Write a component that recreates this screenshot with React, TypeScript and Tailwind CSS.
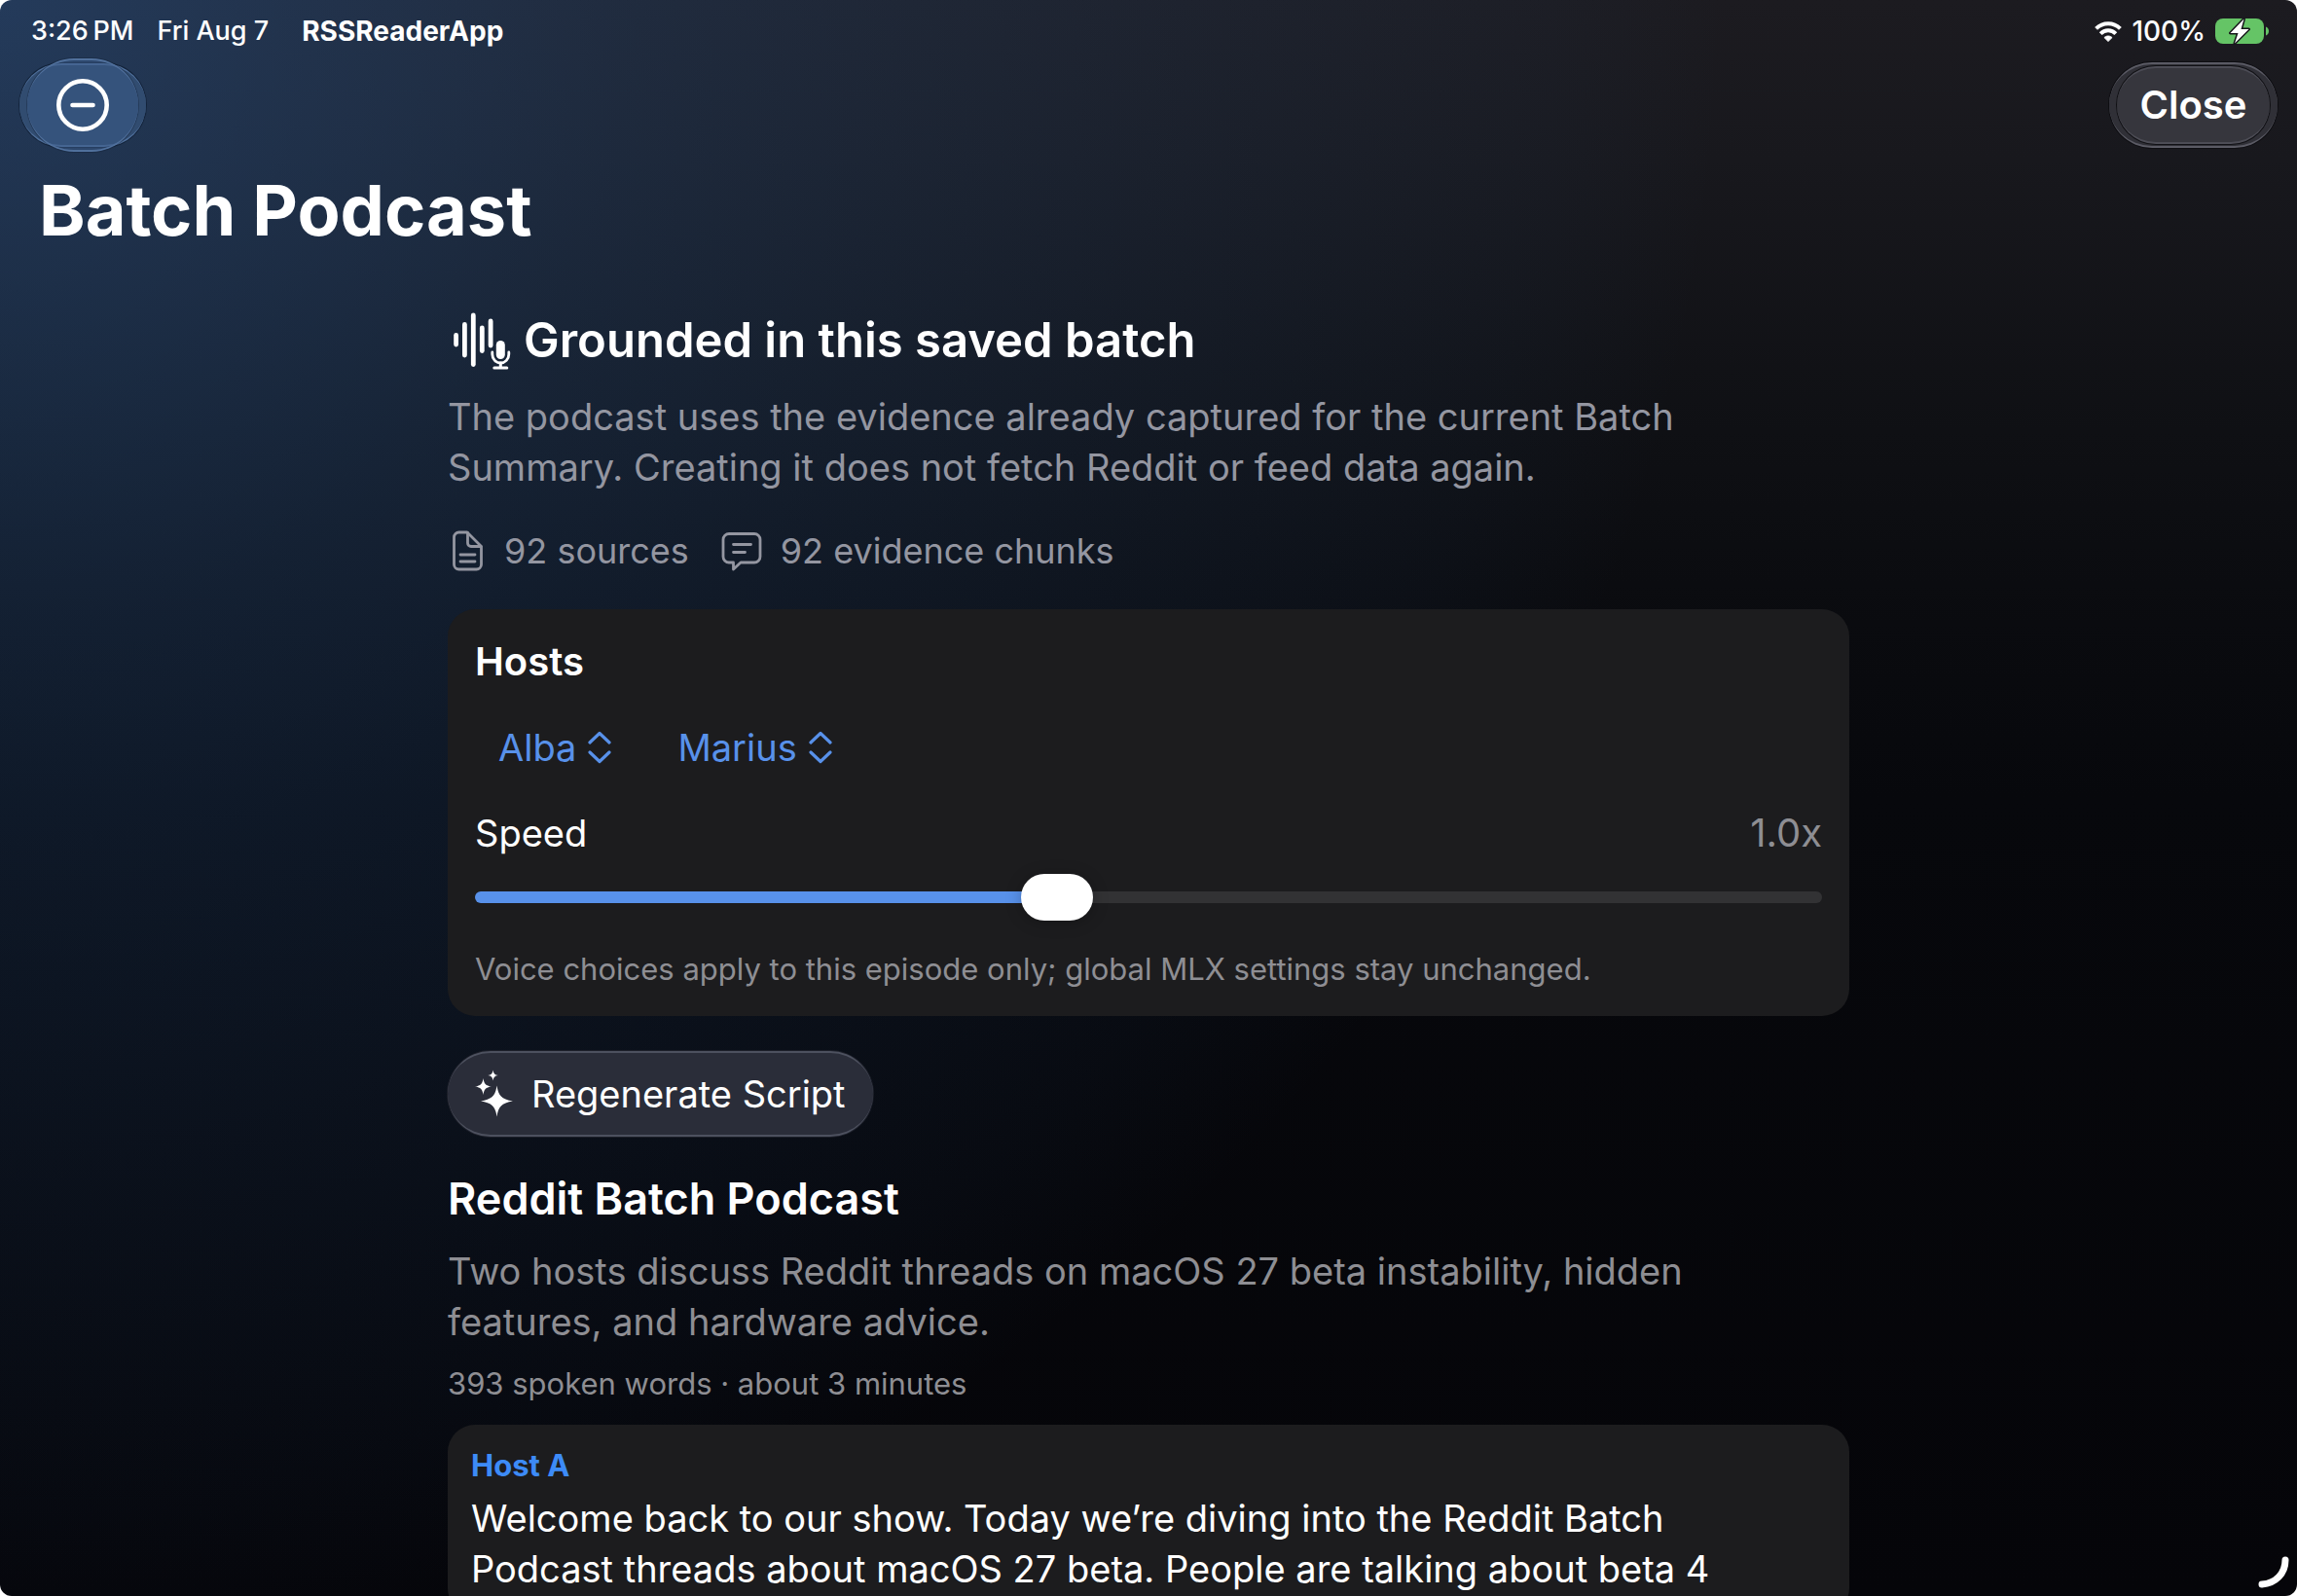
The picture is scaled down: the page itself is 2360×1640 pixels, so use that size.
import { useState } from 'react';
import type { CSSProperties, ReactNode } from 'react';

const voices = ['Alba', 'Marius', 'Cosette', 'Javert'];

const script = [
  {
    host: 'Host A',
    text: 'Welcome back to our show. Today we’re diving into the Reddit Batch Podcast threads about macOS 27 beta. People are talking about beta 4',
  },
];

const WifiIcon = () => (
  <svg viewBox="0 0 28 21" className="h-[21px] w-7" aria-hidden="true">
    <g fill="none" stroke="currentColor" strokeWidth="4">
      <path d="M1.6 7.4a17.6 17.6 0 0 1 24.8 0" />
      <path d="M6.2 12.6a11 11 0 0 1 15.6 0" />
    </g>
    <path
      fill="currentColor"
      d="M14 20.6 9.9 16.6c2.3-2.2 5.9-2.2 8.2 0z"
      stroke="currentColor"
      strokeWidth="0.8"
      strokeLinejoin="round"
    />
  </svg>
);

const BatteryIcon = () => (
  <svg viewBox="0 0 56 28" className="h-7 w-14" aria-hidden="true">
    <rect x="0" y="1" width="50" height="26" rx="8" fill="#65c466" />
    <path d="M52 9.5c2 .8 3 2.5 3 4.5s-1 3.7-3 4.5z" fill="#65c466" />
    <path
      d="M29.5 1.5 15.5 16h8L20 26.500 34.500 12h-8z"
      fill="#fff"
      stroke="#17171b"
      strokeWidth="3"
      strokeLinejoin="round"
      paintOrder="stroke"
    />
  </svg>
);

const MinusCircleIcon = () => (
  <svg
    viewBox="0 0 54 54"
    className="relative size-[54px]"
    fill="none"
    stroke="currentColor"
    strokeWidth="4.6"
    aria-hidden="true"
  >
    <circle cx="27" cy="27" r="24.7" />
    <path d="M16.5 27h21" strokeLinecap="round" />
  </svg>
);

const WaveformMicIcon = () => (
  <svg
    viewBox="0 0 60 60"
    className="size-[60px] shrink-0"
    fill="none"
    stroke="currentColor"
    strokeLinecap="round"
    aria-hidden="true"
  >
    <g strokeWidth="4.8">
      <path d="M2.6 24.5V34" />
      <path d="M11.4 13.5V45" />
      <path d="M20.3 4v50.5" />
      <path d="M29.3 17v23.5" />
      <path d="M38.1 10v25" />
    </g>
    <rect x="43.8" y="30" width="9" height="19" rx="4.5" fill="currentColor" stroke="none" />
    <path d="M39.8 42v2a8.5 9 0 0 0 17 0v-2" strokeWidth="2.8" />
    <path d="M48.3 53v4M41.8 58h13" strokeWidth="3" />
  </svg>
);

const DocumentIcon = () => (
  <svg
    viewBox="0 0 40 44"
    className="h-11 w-10 shrink-0"
    fill="none"
    stroke="currentColor"
    strokeWidth="2.8"
    strokeLinecap="round"
    strokeLinejoin="round"
    aria-hidden="true"
  >
    <path d="M20 3h-8.500a5 5 0 0 0-5 5v28a5 5 0 0 0 5 5h18a5 5 0 0 0 5-5V17.500z" />
    <path d="M20.500 3.500V14a3.500 3.500 0 0 0 3.500 3.500h10" />
    <path d="M13 26h15M13 33h15" />
  </svg>
);

const BubbleIcon = () => (
  <svg
    viewBox="0 0 44 44"
    className="size-11 shrink-0"
    fill="none"
    stroke="currentColor"
    strokeWidth="2.8"
    strokeLinecap="round"
    strokeLinejoin="round"
    aria-hidden="true"
  >
    <path d="M9 4.500h26a6 6 0 0 1 6 6V28a6 6 0 0 1-6 6H21l-7.500 7V34H9a6 6 0 0 1-6-6V10.500a6 6 0 0 1 6-6z" />
    <path d="M13.500 15.500h18M13.500 23.500h12" />
  </svg>
);

const ChevronUpDownIcon = () => (
  <svg
    viewBox="0 0 24 34"
    className="pointer-events-none h-[34px] w-6"
    fill="none"
    stroke="currentColor"
    strokeWidth="3.2"
    strokeLinecap="round"
    strokeLinejoin="round"
    aria-hidden="true"
  >
    <path d="m2 12 10-9.500L22 12M2 22l10 9.500L22 22" />
  </svg>
);

const SparklesIcon = () => (
  <svg
    viewBox="0 0 40 50"
    className="h-[50px] w-10 shrink-0"
    fill="currentColor"
    aria-hidden="true"
  >
    <path d="M22.500 16.500c1.500 10 4.500 14 16.500 16-12 2-15 6-16.500 16-1.500-10-4.500-14-16.500-16 12-2 15-6 16.500-16z" />
    <path d="M8.500 9c.8 5.500 2.500 7.700 8.500 8.500-6 .8-7.700 3-8.500 8.500-.8-5.500-2.500-7.700-8.500-8.500 6-.8 7.700-3 8.500-8.500z" />
    <path d="M18.500.5c.5 3.500 1.700 5 5.200 5.500-3.500.5-4.700 2-5.200 5.500-.5-3.500-1.700-5-5.200-5.500 3.500-.5 4.700-2 5.200-5.500z" />
  </svg>
);

const StatusBar = () => (
  <div className="flex h-16 items-center justify-between pr-7 pl-8 text-[28px] leading-9">
    <div className="flex items-center">
      <span className="text-[27px] font-medium">3:26{'\u2009'}PM</span>
      <span className="ml-6 text-[27px] font-medium">Fri Aug 7</span>
      <span className="ml-[34px] font-bold">RSSReaderApp</span>
    </div>
    <div className="flex items-center gap-2.5">
      <WifiIcon />
      <span className="font-medium">100%</span>
      <BatteryIcon />
    </div>
  </div>
);

const Toolbar = () => (
  <div className="flex h-[88px] items-center justify-between px-5">
    <button
      type="button"
      aria-label="Remove"
      className="relative flex h-[86px] w-[130px] items-center justify-center rounded-full border-y-2 border-[#50709c] bg-[#314c70] shadow-[0_0_0_1px_#13233a]"
    >
      <span className="absolute -inset-y-[7px] inset-x-2 rounded-[48px] border-y-2 border-[#50709c] bg-[#3a5a88]/50 shadow-[0_0_0_1px_#13233a66]" />
      <MinusCircleIcon />
    </button>
    <button
      type="button"
      className="relative flex h-[88px] w-[173px] items-center justify-center rounded-full border-y-2 border-[#5a5a64] bg-[#303037] text-[40px] font-semibold shadow-[0_0_0_1px_#0e0e12]"
    >
      <span className="absolute inset-x-2 inset-y-0.5 rounded-full border-y-2 border-[#4c4c55] bg-[#36363d] shadow-[0_0_0_1px_#101014]" />
      <span className="relative">Close</span>
    </button>
  </div>
);

const VoicePicker = ({ label, initial }: { label: string; initial: string }) => {
  const [voice, setVoice] = useState(initial);

  return (
    <label className="flex items-center gap-3">
      <select
        aria-label={label}
        value={voice}
        onChange={(e) => setVoice(e.target.value)}
        className="[field-sizing:content] h-[52px] appearance-none bg-transparent leading-[52px] outline-none"
      >
        {voices.map((name) => (
          <option key={name}>{name}</option>
        ))}
      </select>
      <ChevronUpDownIcon />
    </label>
  );
};

const MIN_SPEED = 0.7;
const MAX_SPEED = 1.4;

const SpeedSlider = () => {
  const [speed, setSpeed] = useState(1);
  const fill = ((speed - MIN_SPEED) / (MAX_SPEED - MIN_SPEED)) * 100;

  return (
    <div className="flex flex-col gap-4">
      <div className="flex items-center justify-between">
        <label htmlFor="speed">Speed</label>
        <output htmlFor="speed" className="text-[40px] text-[#8e8e93]">
          {speed.toFixed(1)}x
        </output>
      </div>
      <input
        id="speed"
        type="range"
        min={MIN_SPEED}
        max={MAX_SPEED}
        step={0.1}
        value={speed}
        onChange={(e) => setSpeed(Number(e.target.value))}
        style={{ '--fill': `${fill}%` } as CSSProperties}
        className="h-12 w-full appearance-none bg-transparent outline-none [&::-webkit-slider-runnable-track]:h-3 [&::-webkit-slider-runnable-track]:rounded-full [&::-webkit-slider-runnable-track]:bg-[linear-gradient(to_right,#5891ea_var(--fill),#323234_var(--fill))] [&::-webkit-slider-thumb]:-mt-[18px] [&::-webkit-slider-thumb]:h-12 [&::-webkit-slider-thumb]:w-[74px] [&::-webkit-slider-thumb]:appearance-none [&::-webkit-slider-thumb]:rounded-full [&::-webkit-slider-thumb]:bg-white [&::-webkit-slider-thumb]:shadow-[0_2px_16px_#00000040]"
      />
    </div>
  );
};

const Card = ({ className, children }: { className: string; children: ReactNode }) => (
  <section className={`flex flex-col rounded-[28px] bg-[#1c1c1e] ${className}`}>
    {children}
  </section>
);

export default function App() {
  return (
    <div className="h-screen bg-white">
      <div className="relative h-full overflow-hidden rounded-xl bg-[#040408] bg-[radial-gradient(ellipse_75%_105%_at_0%_0%,rgb(44_90_149/0.5)_0%,rgb(44_90_149/0.39)_16%,rgb(44_90_149/0.26)_37%,rgb(44_90_149/0.19)_53%,rgb(44_90_149/0.12)_70%,rgb(44_90_149/0.05)_90%,rgb(44_90_149/0)_100%),linear-gradient(to_bottom,#1c1b20_0%,#18181d_10%,#0f1014_27%,#0a0b0f_39%,#07080c_50%,#050509_100%)] font-['Inter','Liberation_Sans',sans-serif] text-[38px] leading-[52px] text-white">
        <StatusBar />
        <Toolbar />
        <h1 className="mt-5 px-10 text-[72px] leading-[88px] font-bold">Batch Podcast</h1>

        <main className="mx-auto mt-[60px] flex max-w-[1440px] flex-col">
          <div className="flex items-center gap-3 pl-1.5">
            <WaveformMicIcon />
            <h2 className="text-[49px] leading-[60px] font-semibold">
              Grounded in this saved batch
            </h2>
          </div>
          <p className="mt-[22px] pr-14 text-[#9496a1]">
            The podcast uses the evidence already captured for the current Batch
            Summary. Creating it does not fetch Reddit or feed data again.
          </p>
          <div className="mt-[34px] flex items-center gap-8 text-[36px] text-[#9496a1]">
            <span className="flex items-center gap-[18px]">
              <DocumentIcon />
              92 sources
            </span>
            <span className="flex items-center gap-[18px]">
              <BubbleIcon />
              92 evidence chunks
            </span>
          </div>

          <Card className="mt-[34px] p-7">
            <h3 className="text-[40px] font-semibold">Hosts</h3>
            <div className="mt-9 mb-9 flex gap-[68px] px-6 text-[#5891ea]">
              <VoicePicker label="Host A voice" initial="Alba" />
              <VoicePicker label="Host B voice" initial="Marius" />
            </div>
            <SpeedSlider />
            <p className="mt-[30px] text-[31px] leading-10 text-[#8e8e93]">
              Voice choices apply to this episode only; global MLX settings stay unchanged.
            </p>
          </Card>

          <button
            type="button"
            className="mt-9 flex h-[88px] items-center gap-[18px] self-start rounded-[44px] border-y-2 border-[#4d515f] bg-[#2a2d39] px-7 shadow-[0_0_0_1px_#1c1f29]"
          >
            <SparklesIcon />
            Regenerate Script
          </button>

          <h2 className="mt-9 text-[45px] leading-[56px] font-semibold">Reddit Batch Podcast</h2>
          <p className="mt-5 pr-14 text-[#8e8e93]">
            Two hosts discuss Reddit threads on macOS 27 beta instability, hidden features, and
            hardware advice.
          </p>
          <p className="mt-[18px] text-[31px] leading-10 text-[#8e8e93]">
            393 spoken words · about 3 minutes
          </p>

          {script.map(({ host, text }) => (
            <Card key={host} className="mt-[22px] gap-2 px-6 py-[22px]">
              <h3 className="text-[31px] leading-10 font-bold text-[#3d8bf7]">{host}</h3>
              <p className="pr-14">{text}</p>
            </Card>
          ))}
        </main>

        <svg
          viewBox="0 0 48 48"
          className="absolute right-0 bottom-0 size-12"
          fill="none"
          stroke="#fff"
          strokeWidth="7"
          strokeLinecap="round"
          aria-hidden="true"
        >
          <path d="M12 36c14-1 24-11 24-25" />
        </svg>
      </div>
    </div>
  );
}
